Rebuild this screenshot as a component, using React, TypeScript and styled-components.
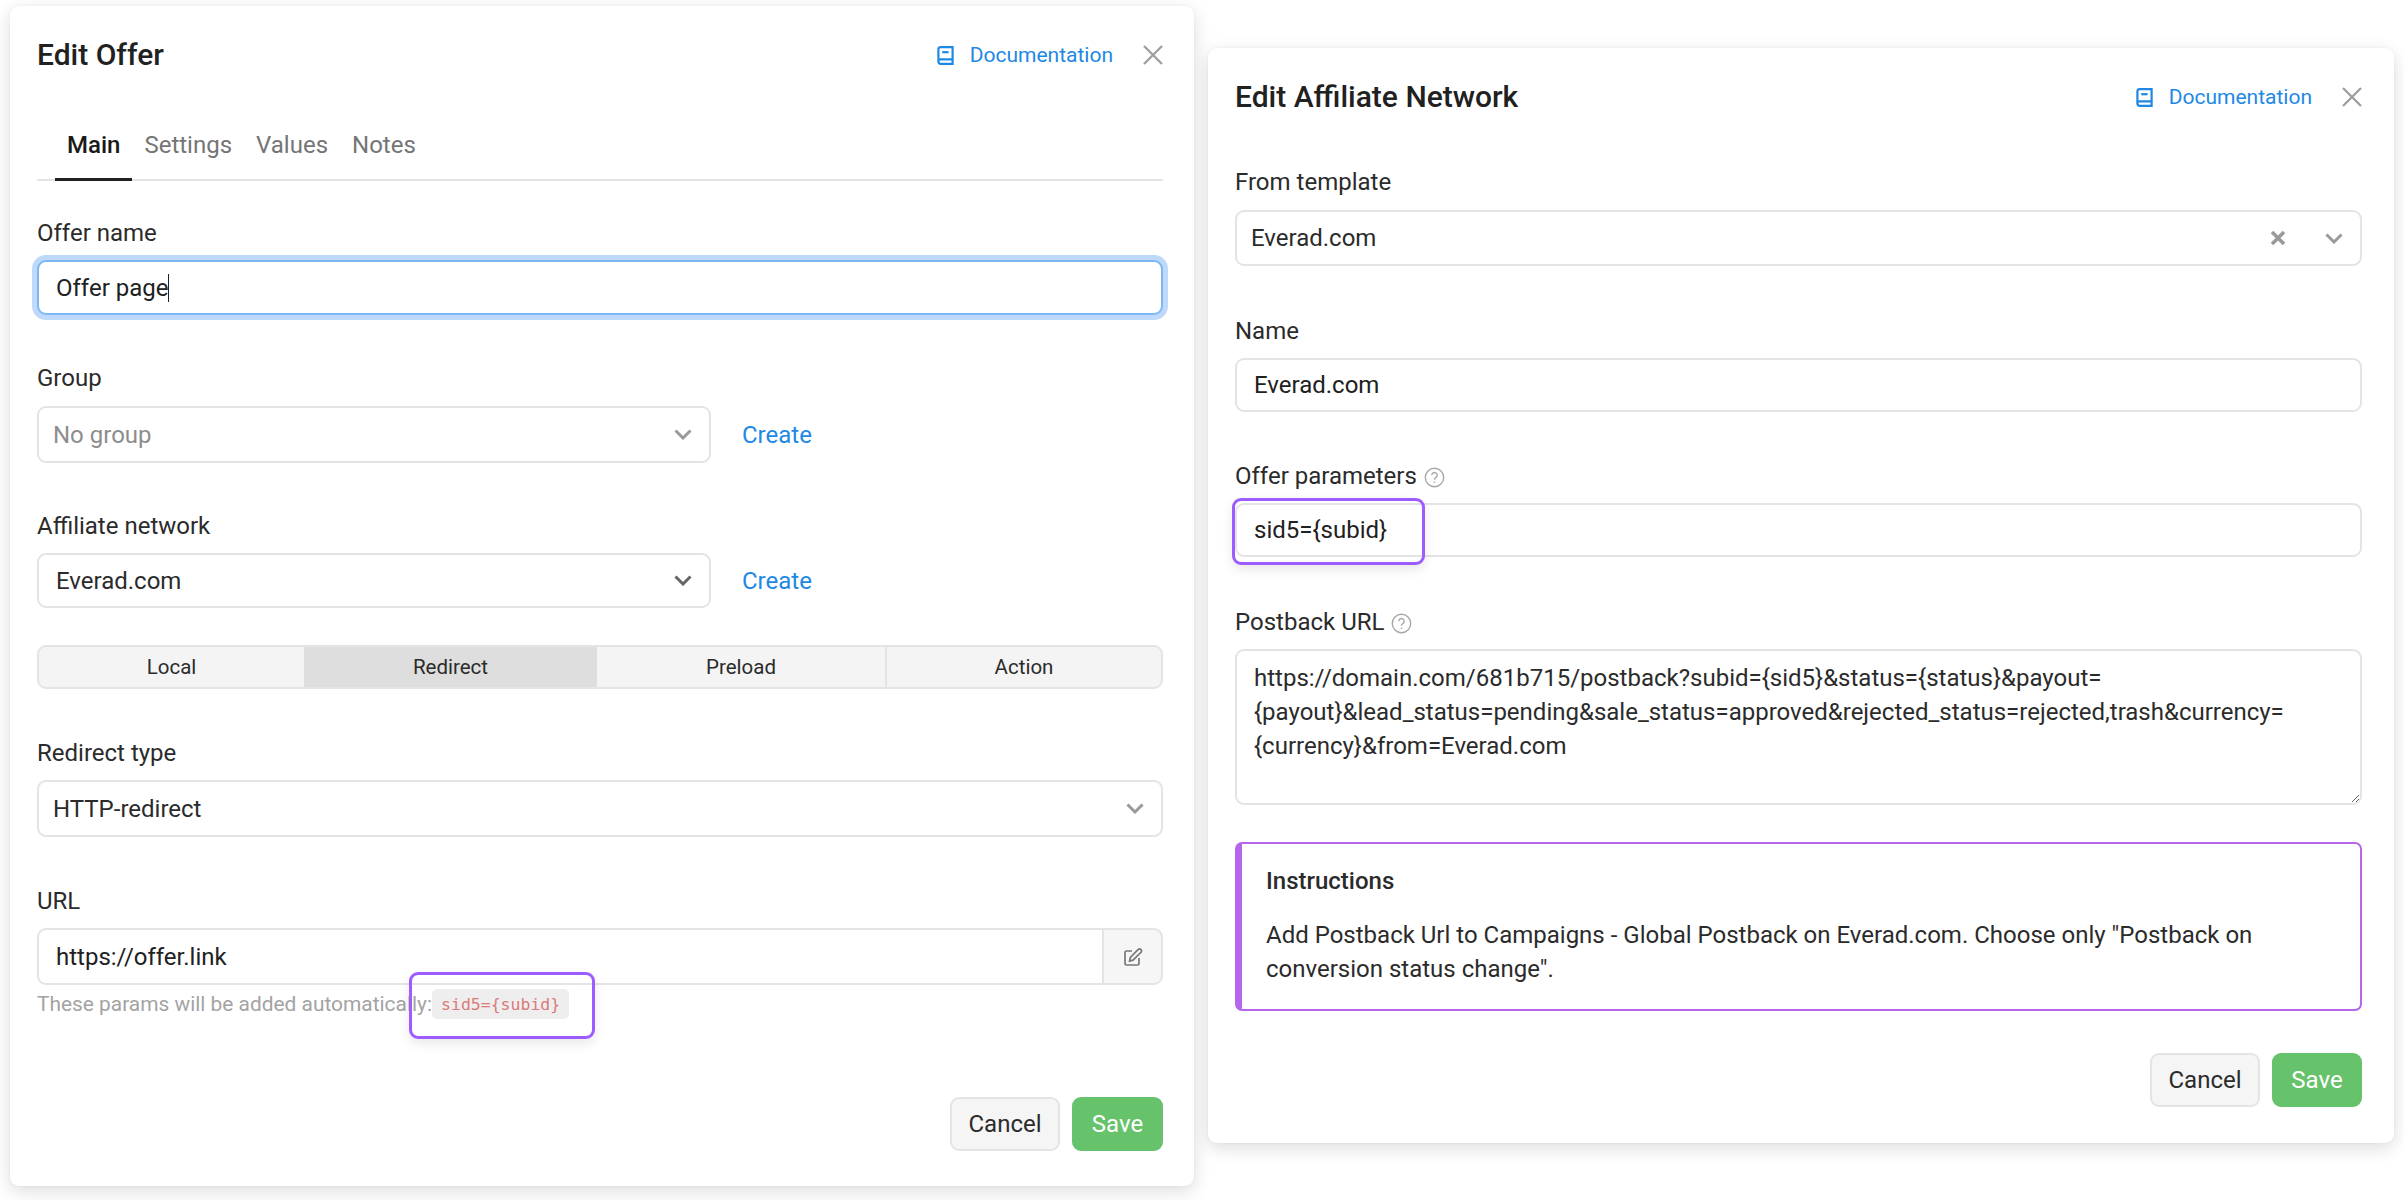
import React from "react";
import styled, { createGlobalStyle } from "styled-components";

const Global = createGlobalStyle`
  html, body { margin: 0; padding: 0; background: #fff; }
  body { font-family: Roboto, "Liberation Sans", sans-serif; color: #212121; font-size: 24px; }
  * { box-sizing: border-box; }
`;

const Page = styled.div`
  display: flex;
  align-items: flex-start;
  gap: 14px;
  width: 2404px;
  height: 1200px;
  padding: 0 10px;
  overflow: hidden;
`;

const Card = styled.section<{ $width: number; $top: number; $bottom: number; $right: number }>`
  position: relative;
  flex: none;
  width: ${(p) => p.$width}px;
  margin-top: ${(p) => p.$top}px;
  padding: 27px ${(p) => p.$right}px ${(p) => p.$bottom}px 27px;
  background: #fff;
  border-radius: 9px;
  box-shadow: 0 5px 18px rgba(0, 0, 0, 0.14), 0 0 3px rgba(0, 0, 0, 0.05);
`;

const Header = styled.header`
  display: flex;
  align-items: center;
  height: 44px;
`;

const Title = styled.h2`
  flex: 1;
  margin: 0 0 2px;
  font-size: 30px;
  font-weight: 500;
  color: #212121;
`;

const DocLink = styled.a`
  display: flex;
  align-items: center;
  gap: 16px;
  color: #1e88e5;
  font-size: 21px;
`;

const CloseButton = styled.span`
  display: flex;
  margin-left: 30px;
  color: #9e9e9e;
`;

const TabBar = styled.nav`
  display: flex;
  height: 71px;
  margin-top: 33px;
  padding-left: 18px;
  border-bottom: 2px solid #e4e4e4;
`;

const Tab = styled.span<{ $active?: boolean }>`
  display: flex;
  align-items: center;
  height: 71px;
  padding: 2px 12px 0;
  color: ${(p) => (p.$active ? "#1a1a1a" : "#757575")};
  font-weight: ${(p) => (p.$active ? 500 : 400)};
  border-bottom: 3px solid ${(p) => (p.$active ? "#212121" : "transparent")};
`;

const Field = styled.div<{ $top: number }>`
  position: relative;
  margin-top: ${(p) => p.$top}px;
`;

const Label = styled.label<{ $gap?: number }>`
  display: flex;
  align-items: center;
  gap: 7px;
  height: 28px;
  margin-bottom: ${(p) => p.$gap ?? 13}px;
  color: #2b2b2b;
`;

const Hint = styled.span`
  display: flex;
  margin-top: 2px;
  color: #a8a8a8;
`;

const Input = styled.div<{ $focused?: boolean; $joined?: boolean; $h?: number }>`
  display: flex;
  align-items: center;
  flex: 1;
  height: ${(p) => p.$h ?? 55}px;
  padding: 0 17px;
  background: #fff;
  border: 2px solid ${(p) => (p.$focused ? "#7db8f5" : "#e4e4e4")};
  border-radius: ${(p) => (p.$joined ? "9px 0 0 9px" : "9px")};
  border-right-width: ${(p) => (p.$joined ? 0 : 2)}px;
  box-shadow: ${(p) => (p.$focused ? "0 0 0 5px #bfd9fb" : "none")};
`;

const Caret = styled.span`
  display: inline-block;
  width: 1px;
  height: 28px;
  background: #212121;
`;

const Row = styled.div`
  display: flex;
  align-items: center;
`;

const Select = styled.div<{ $wide?: boolean; $muted?: boolean; $inset?: number; $h?: number }>`
  display: flex;
  align-items: center;
  flex: ${(p) => (p.$wide ? 1 : "none")};
  width: ${(p) => (p.$wide ? "auto" : "674px")};
  height: ${(p) => p.$h ?? 57}px;
  padding: 0 17px 0 ${(p) => p.$inset ?? 14}px;
  color: ${(p) => (p.$muted ? "#8d8d8d" : "#2b2b2b")};
  border: 2px solid #e4e4e4;
  border-radius: 9px;
`;

const SelectValue = styled.span`
  flex: 1;
`;

const Clear = styled.span`
  display: flex;
  margin-right: 39px;
  color: #9a9a9a;
`;

const Chevron = styled.span<{ $dark?: boolean }>`
  display: flex;
  color: ${(p) => (p.$dark ? "#666" : "#9a9a9a")};
`;

const CreateLink = styled.a`
  margin-left: 31px;
  color: #1e88e5;
`;

const Segments = styled.div`
  display: grid;
  grid-template-columns: 265px 293px 288px 1fr;
  height: 44px;
  margin-top: 37px;
  overflow: hidden;
  background: #f4f4f4;
  border: 2px solid #e4e4e4;
  border-radius: 9px;
`;

const Segment = styled.span<{ $active?: boolean; $divided?: boolean }>`
  display: flex;
  align-items: center;
  justify-content: center;
  font-size: 20.5px;
  color: #2b2b2b;
  background: ${(p) => (p.$active ? "#dedede" : "transparent")};
  border-left: ${(p) => (p.$divided ? "2px solid #e4e4e4" : "none")};
`;

const Append = styled.span`
  display: flex;
  align-items: center;
  justify-content: center;
  flex: none;
  width: 61px;
  height: 57px;
  color: #777;
  background: #f6f6f6;
  border: 2px solid #e4e4e4;
  border-radius: 0 9px 9px 0;
`;

const HelpLine = styled.div`
  display: flex;
  align-items: center;
  height: 30px;
  margin-top: 4px;
  color: #a3a3a3;
  font-size: 20.9px;
`;

const Code = styled.code`
  display: inline-flex;
  align-items: center;
  height: 30px;
  padding: 0 9px;
  color: #dc7a7a;
  background: #eeeeee;
  border-radius: 5px;
  font-family: "DejaVu Sans Mono", "Liberation Mono", monospace;
  font-size: 16.5px;
`;

const Highlight = styled.span<{ $l: number; $t: number; $w: number; $h: number }>`
  position: absolute;
  left: ${(p) => p.$l}px;
  top: ${(p) => p.$t}px;
  width: ${(p) => p.$w}px;
  height: ${(p) => p.$h}px;
  border: 3px solid #9c5cff;
  border-radius: 9px;
  box-shadow: 0 5px 12px rgba(0, 0, 0, 0.09);
  pointer-events: none;
`;

const Footer = styled.footer<{ $top: number }>`
  display: flex;
  justify-content: flex-end;
  gap: 12px;
  margin-top: ${(p) => p.$top}px;
`;

const Button = styled.button<{ $primary?: boolean; $w: number }>`
  width: ${(p) => p.$w}px;
  height: 54px;
  padding: 0;
  font: inherit;
  color: ${(p) => (p.$primary ? "#fff" : "#2b2b2b")};
  background: ${(p) => (p.$primary ? "#66c26b" : "#f5f5f5")};
  border: 2px solid ${(p) => (p.$primary ? "#66c26b" : "#e4e4e4")};
  border-radius: 9px;
`;

const PostbackArea = styled.textarea`
  display: block;
  width: 100%;
  height: 156px;
  padding: 10px 17px;
  font: inherit;
  line-height: 34px;
  color: #2b2b2b;
  background: #fff;
  border: 2px solid #e4e4e4;
  border-radius: 9px;
  outline: none;
  resize: vertical;
`;

const Notice = styled.aside`
  height: 169px;
  margin-top: 37px;
  padding: 20px 24px 0;
  line-height: 34px;
  border: 2px solid #b567ec;
  border-left-width: 7px;
  border-radius: 7px;
  color: #2b2b2b;
`;

const NoticeTitle = styled.h4`
  margin: 0 0 20px;
  font-size: 24px;
  font-weight: 500;
  line-height: 34px;
`;

const NoticeText = styled.p`
  margin: 0;
`;

const BookIcon = () => (
  <svg width="17" height="19" viewBox="0 0 17 19" fill="none" stroke="currentColor" strokeWidth="2.2">
    <path d="M1.4 15.5V3.5A2.4 2.4 0 0 1 3.8 1.2H15.6V17.8H3.6A2.2 2.2 0 0 1 1.4 15.5ZM1.4 15.5A2.2 2.2 0 0 1 3.6 13.4H15.6" />
    <path d="M5.2 6.2H11.6" />
  </svg>
);

const CloseIcon = () => (
  <svg width="20" height="20" viewBox="0 0 20 20" stroke="currentColor" strokeWidth="2.3" fill="none">
    <path d="M1 1L19 19M19 1L1 19" />
  </svg>
);

const ChevronIcon = () => (
  <svg width="18" height="11" viewBox="0 0 18 11" fill="none" stroke="currentColor" strokeWidth="3">
    <path d="M1.5 1.5L9 9L16.5 1.5" />
  </svg>
);

const ClearIcon = () => (
  <svg width="16" height="16" viewBox="0 0 16 16" fill="none" stroke="currentColor" strokeWidth="3.6">
    <path d="M2 2L14 14M14 2L2 14" />
  </svg>
);

const HelpIcon = () => (
  <svg width="21" height="21" viewBox="0 0 21 21" fill="none" stroke="currentColor" strokeWidth="1.4">
    <circle cx="10.5" cy="10.5" r="9.2" />
    <path d="M7.8 8.2A2.7 2.7 0 1 1 12 10.4C11 11 10.5 11.5 10.5 12.8" />
    <path d="M10.5 14.6V16" />
  </svg>
);

const EditIcon = () => (
  <svg width="20" height="20" viewBox="0 0 20 20" fill="none" stroke="currentColor" strokeWidth="1.7">
    <path d="M9 4H3.5A1.5 1.5 0 0 0 2 5.5V16.5A1.5 1.5 0 0 0 3.5 18H14.5A1.5 1.5 0 0 0 16 16.5V11" />
    <path d="M15.5 2.2A2 2 0 0 1 18.2 5L10 13.2L6.6 14L7.4 10.4Z" />
  </svg>
);

const ModalHead = ({ title }: { title: string }) => (
  <Header>
    <Title>{title}</Title>
    <DocLink>
      <BookIcon />
      Documentation
    </DocLink>
    <CloseButton>
      <CloseIcon />
    </CloseButton>
  </Header>
);

const postback =
  "https://domain.com/681b715/postback?subid={sid5}&status={status}&payout={payout}&lead_status=pending&sale_status=approved&rejected_status=rejected,trash&currency={currency}&from=Everad.com";

export default function App() {
  return (
    <>
      <Global />
      <Page>
        <Card $width={1184} $top={6} $bottom={35} $right={31}>
          <ModalHead title="Edit Offer" />
          <TabBar>
            <Tab $active>Main</Tab>
            <Tab>Settings</Tab>
            <Tab>Values</Tab>
            <Tab>Notes</Tab>
          </TabBar>

          <Field $top={38}>
            <Label>Offer name</Label>
            <Input $focused>
              Offer page
              <Caret />
            </Input>
          </Field>

          <Field $top={49}>
            <Label $gap={14}>Group</Label>
            <Row>
              <Select $muted>
                <SelectValue>No group</SelectValue>
                <Chevron>
                  <ChevronIcon />
                </Chevron>
              </Select>
              <CreateLink>Create</CreateLink>
            </Row>
          </Field>

          <Field $top={49}>
            <Label>Affiliate network</Label>
            <Row>
              <Select $inset={17} $h={55}>
                <SelectValue>Everad.com</SelectValue>
                <Chevron $dark>
                  <ChevronIcon />
                </Chevron>
              </Select>
              <CreateLink>Create</CreateLink>
            </Row>
          </Field>

          <Segments>
            <Segment>Local</Segment>
            <Segment $active>Redirect</Segment>
            <Segment>Preload</Segment>
            <Segment $divided>Action</Segment>
          </Segments>

          <Field $top={50}>
            <Label>Redirect type</Label>
            <Row>
              <Select $wide>
                <SelectValue>HTTP-redirect</SelectValue>
                <Chevron>
                  <ChevronIcon />
                </Chevron>
              </Select>
            </Row>
          </Field>

          <Field $top={50}>
            <Label>URL</Label>
            <Row>
              <Input $joined $h={57}>https://offer.link</Input>
              <Append>
                <EditIcon />
              </Append>
            </Row>
            <HelpLine>
              These params will be added automatically:
              <Code>sid5={"{subid}"}</Code>
            </HelpLine>
            <Highlight $l={372} $t={85} $w={186} $h={67} />
          </Field>

          <Footer $top={78}>
            <Button $w={110}>Cancel</Button>
            <Button $primary $w={91}>Save</Button>
          </Footer>
        </Card>

        <Card $width={1186} $top={48} $bottom={36} $right={32}>
          <ModalHead title="Edit Affiliate Network" />

          <Field $top={49}>
            <Label $gap={14}>From template</Label>
            <Row>
              <Select $wide $h={56}>
                <SelectValue>Everad.com</SelectValue>
                <Clear>
                  <ClearIcon />
                </Clear>
                <Chevron>
                  <ChevronIcon />
                </Chevron>
              </Select>
            </Row>
          </Field>

          <Field $top={51}>
            <Label>Name</Label>
            <Input $h={54}>Everad.com</Input>
          </Field>

          <Field $top={50}>
            <Label>
              Offer parameters
              <Hint>
                <HelpIcon />
              </Hint>
            </Label>
            <Input $h={54}>sid5={"{subid}"}</Input>
            <Highlight $l={-3} $t={36} $w={193} $h={67} />
          </Field>

          <Field $top={51}>
            <Label>
              Postback URL
              <Hint>
                <HelpIcon />
              </Hint>
            </Label>
            <PostbackArea readOnly value={postback} />
          </Field>

          <Notice>
            <NoticeTitle>Instructions</NoticeTitle>
            <NoticeText>
              Add Postback Url to Campaigns - Global Postback on Everad.com. Choose only "Postback on conversion status
              change".
            </NoticeText>
          </Notice>

          <Footer $top={42}>
            <Button $w={110}>Cancel</Button>
            <Button $primary $w={90}>Save</Button>
          </Footer>
        </Card>
      </Page>
    </>
  );
}
